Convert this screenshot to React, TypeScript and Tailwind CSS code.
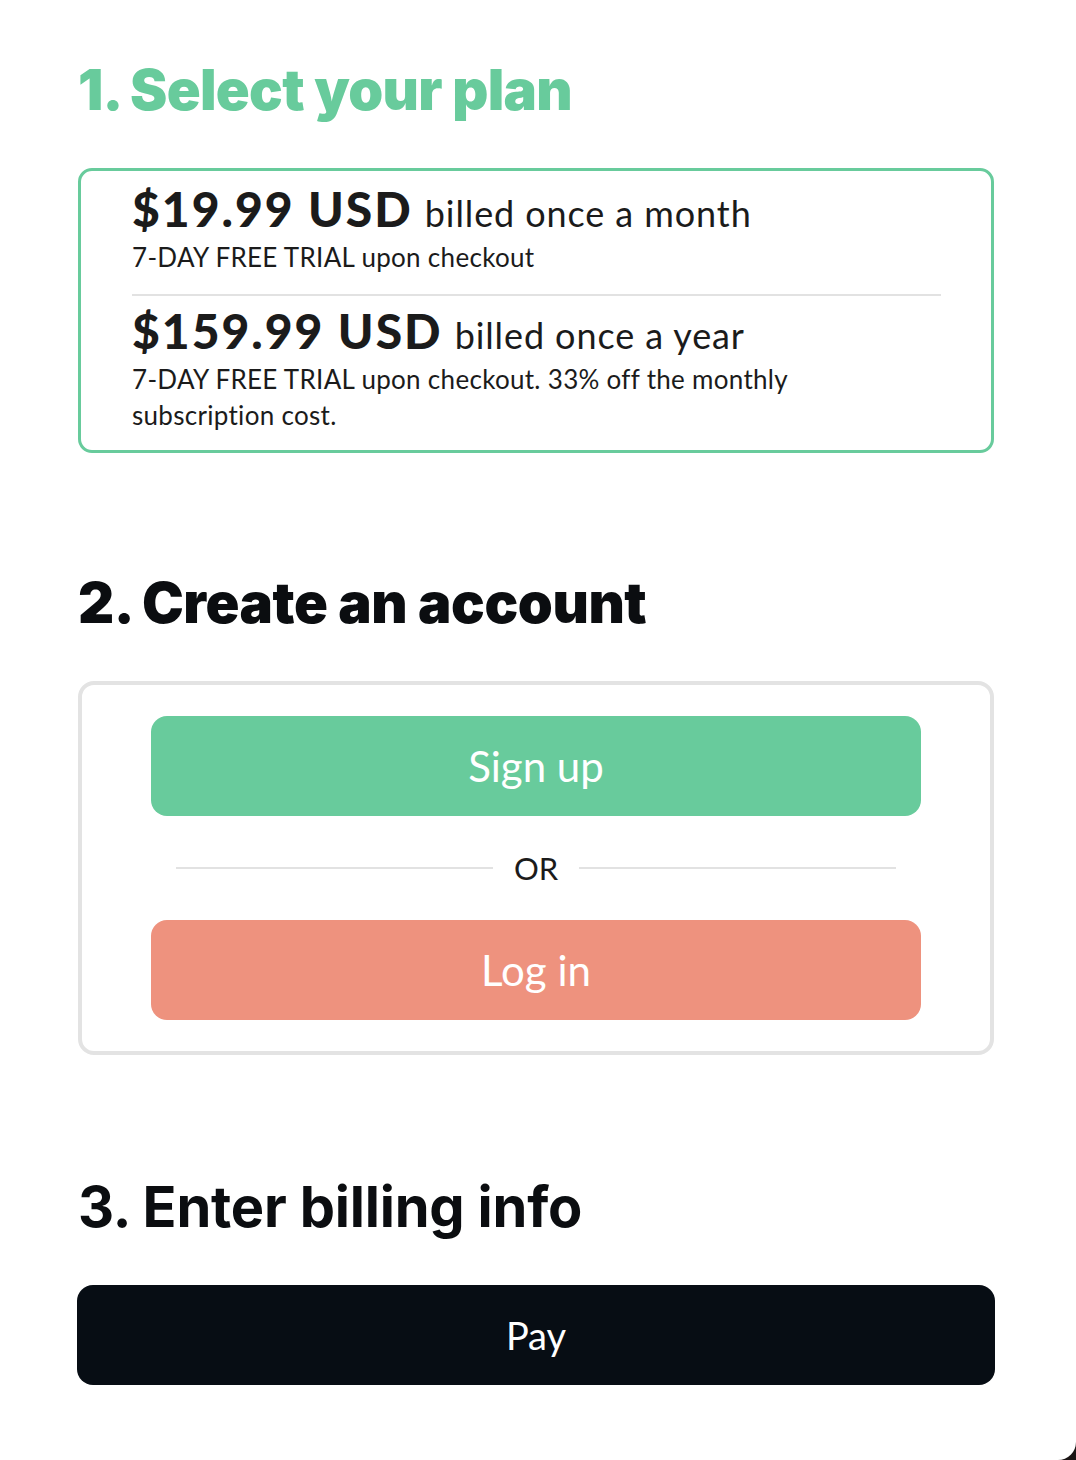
import React from "react";

export default function App() {
  const body = { fontFamily: "Lato, 'Noto Sans', sans-serif" };
  const head = { fontFamily: "Inter, 'Noto Sans', sans-serif" };
  return (
    <div className="relative w-[1076px] h-[1460px] bg-white overflow-hidden" style={body}>
      <div className="pl-[78px] pr-[82px] pt-[56px]">
        <h1 className="text-[56px] leading-[68px] font-black text-[#68cb9c] tracking-[-0.7px]" style={head}>
          1. Select your plan
        </h1>
        <div className="mt-[44px] border-[3px] border-[#68cb9c] rounded-[14px] pl-[51px] pr-[50px] pt-[12px] pb-[17px] text-[#1b1b1b]">
          <div className="pb-[19px]">
            <div className="flex items-baseline gap-[12px] leading-[52px]">
              <span className="text-[48px] font-black tracking-[2px]">$19.99 USD</span>
              <span className="text-[36px] tracking-[0.9px]">billed once a month</span>
            </div>
            <div className="text-[26px] leading-[36px] tracking-[0.3px]">7-DAY FREE TRIAL upon checkout</div>
          </div>
          <div className="h-[2px] bg-[#e2e2e2]" />
          <div className="pt-[6px]">
            <div className="flex items-baseline gap-[12px] leading-[58px]">
              <span className="text-[48px] font-black tracking-[2px]">$159.99 USD</span>
              <span className="text-[36px] tracking-[0.9px]">billed once a year</span>
            </div>
            <div className="text-[26px] leading-[36px] tracking-[0.3px] w-[680px] mt-[-3px]">
              7-DAY FREE TRIAL upon checkout. 33% off the monthly subscription cost.
            </div>
          </div>
        </div>

        <h2 className="mt-[116px] text-[56px] leading-[68px] font-black text-[#0b0d10] tracking-[-0.4px]" style={head}>
          2. Create an account
        </h2>
        <div className="mt-[44px] border-[4px] border-[#e3e3e3] rounded-[16px] px-[69px] pt-[31px] pb-[31px]">
          <button className="w-full h-[100px] rounded-[16px] bg-[#68cb9c] text-white text-[42px]">Sign up</button>
          <div className="flex items-center gap-[21px] px-[25px] h-[104px]">
            <div className="flex-1 h-[2px] bg-[#e2e2e2]" />
            <span className="text-[31px] text-[#1b1b1b]">OR</span>
            <div className="flex-1 h-[2px] bg-[#e2e2e2]" />
          </div>
          <button className="w-full h-[100px] rounded-[16px] bg-[#ee927e] text-white text-[42px]">Log in</button>
        </div>

        <h2 className="mt-[118px] text-[56px] leading-[68px] font-bold text-[#0b0d10] tracking-[-0.2px]" style={head}>
          3. Enter billing info
        </h2>
        <button className="mt-[44px] w-[918px] ml-[-1px] h-[100px] rounded-[16px] bg-[#070d14] text-white text-[38px]">Pay</button>
      </div>
      <div className="absolute right-0 bottom-0 w-[18px] h-[18px] bg-[#1a1414]">
        <div className="w-full h-full bg-white rounded-br-[18px]" />
      </div>
    </div>
  );
}
